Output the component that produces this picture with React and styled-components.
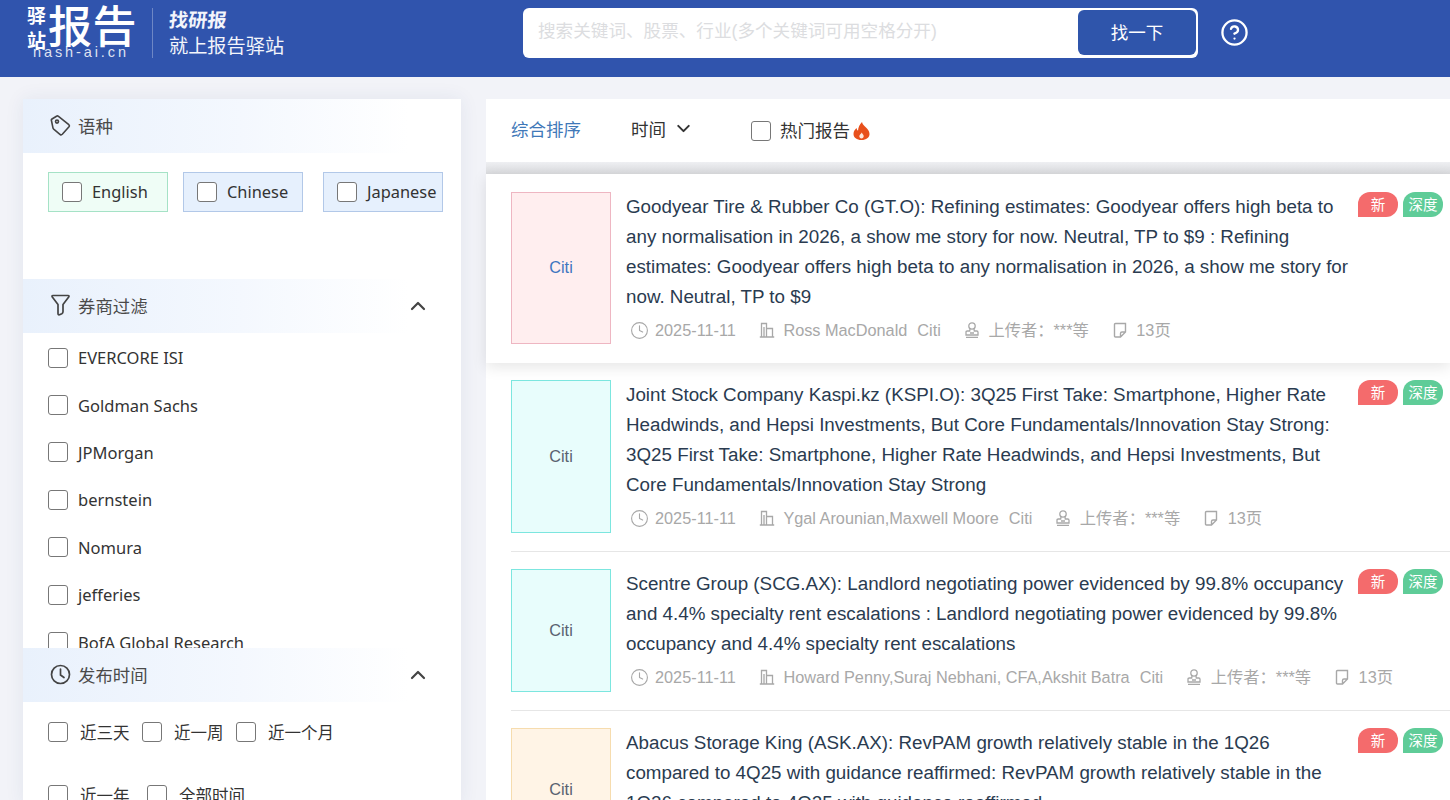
import React from 'react';
import styled, { createGlobalStyle } from 'styled-components';
import { Clock, ChevronUp, ChevronDown, CircleHelp } from 'lucide-react';

const BROKERS = ['EVERCORE ISI', 'Goldman Sachs', 'JPMorgan', 'bernstein', 'Nomura', 'jefferies', 'BofA Global Research', 'Morgan Stanley'];

const REPORTS = [
	{
		title: 'Goodyear Tire & Rubber Co (GT.O): Refining estimates: Goodyear offers high beta to any normalisation in 2026, a show me story for now. Neutral, TP to $9 : Refining estimates: Goodyear offers high beta to any normalisation in 2026, a show me story for now. Neutral, TP to $9',
		authors: 'Ross MacDonald',
		tone: 'pink',
		active: true,
	},
	{
		title: 'Joint Stock Company Kaspi.kz (KSPI.O): 3Q25 First Take: Smartphone, Higher Rate Headwinds, and Hepsi Investments, But Core Fundamentals/Innovation Stay Strong: 3Q25 First Take: Smartphone, Higher Rate Headwinds, and Hepsi Investments, But Core Fundamentals/Innovation Stay Strong',
		authors: 'Ygal Arounian,Maxwell Moore',
		tone: 'cyan',
	},
	{
		title: 'Scentre Group (SCG.AX): Landlord negotiating power evidenced by 99.8% occupancy and 4.4% specialty rent escalations : Landlord negotiating power evidenced by 99.8% occupancy and 4.4% specialty rent escalations',
		authors: 'Howard Penny,Suraj Nebhani, CFA,Akshit Batra',
		tone: 'cyan',
	},
	{
		title: 'Abacus Storage King (ASK.AX): RevPAM growth relatively stable in the 1Q26 compared to 4Q25 with guidance reaffirmed: RevPAM growth relatively stable in the 1Q26 compared to 4Q25 with guidance reaffirmed',
		authors: 'James Druce',
		tone: 'cream',
	},
];

const TONES = {
	pink: { bg: '#ffeeef', border: '#eeb6c2', text: '#3f76c0' },
	cyan: { bg: '#e8fdfc', border: '#7ce6df', text: '#5a6270' },
	cream: { bg: '#fff4e6', border: '#f6dcae', text: '#5a6270' },
};

const TagIcon = () => (
	<svg width="21" height="21" viewBox="0 0 21 21" fill="none" stroke="#444" strokeWidth="1.6">
		<path d="M1.500 5.800Q1 4.700 2 4L6.500 1.200Q7.500.6 8.500 1.300L18.800 9.700Q19.800 10.700 19 11.700L12.300 19.300Q11.300 20.300 10.200 19.500L3.700 14.200Q3 13.600 2.900 12.700Z" />
		<circle cx="7" cy="6.600" r="1.500" />
	</svg>
);

const FunnelIcon = () => (
	<svg width="21" height="22" viewBox="0 0 21 22" fill="none" stroke="#444" strokeWidth="1.700" strokeLinejoin="round">
		<path d="M3 1.500H18Q19.500 1.500 18.700 3L13 10.500V17.800Q13 19 11.800 19.700L9.500 20.800Q8 21.300 8 19.500V10.500L2.300 3Q1.500 1.500 3 1.500Z" />
	</svg>
);

const ClockIcon = () => (
	<svg width="21" height="21" viewBox="0 0 21 21" fill="none" stroke="#444" strokeWidth="1.700" strokeLinecap="round">
		<circle cx="10.500" cy="10.500" r="9" />
		<path d="M10.500 5v6l3.500 2.500" />
	</svg>
);

const BuildingIcon = () => (
	<svg width="16" height="16" viewBox="0 0 16 16" fill="none" stroke="#a8a8a8" strokeWidth="1.300">
		<path d="M.8 15h14.400M2.500 15V1.500h5V15M7.500 6.500h6V15M5 5v10" />
	</svg>
);

const UploaderIcon = () => (
	<svg width="16" height="16" viewBox="0 0 16 16" fill="none" stroke="#a8a8a8" strokeWidth="1.300">
		<circle cx="8" cy="4" r="3.200" />
		<path d="M6 7l-.3 2H3.200Q2 9 2 10.200V13h12v-2.800Q14 9 12.800 9h-2.500L10 7M2 15.400h12M6 11h4" />
	</svg>
);

const PageIcon = () => (
	<svg width="16" height="16" viewBox="0 0 16 16" fill="none" stroke="#a8a8a8" strokeWidth="1.400">
		<path d="M3.500 1.500h10v8.500l-5 5h-5q-1 0-1-1v-11.500q0-1 1-1zM13.500 10h-3.500q-1.500 0-1.500 1.500V15" />
	</svg>
);

const FlameIcon = () => (
	<svg width="17" height="18" viewBox="0 0 17 18">
		<path fill="#e8501c" d="M9 0c.5 2.500 2.300 3.800 4 5.600 1.600 1.700 3.500 3.600 3.500 6.400 0 3.500-3.300 6-8 6s-8-2.500-8-6c0-2.700 1.500-4.600 3-6 .2 1.300.7 2.200 1.500 2.700C5.300 5.600 6.500 2.300 9 0z" />
		<path fill="#ffe6da" d="M8.700 10.500c.4 1.200 2 2 2 3.800 0 1.200-.9 2.200-2.200 2.200s-2.200-1-2.200-2.200c0-1.700 1.900-2.300 2.400-3.800z" />
	</svg>
);

const App = () => (
	<>
		<GlobalStyle />
		<Header>
			<Logo>
				<LogoTop>
					<LogoStack>
						<span>驿</span>
						<span>站</span>
					</LogoStack>
					<LogoBig>报告</LogoBig>
				</LogoTop>
				<LogoDomain>nash-ai.cn</LogoDomain>
			</Logo>
			<Slogan>
				<SloganBold>找研报</SloganBold>
				<span>就上报告驿站</span>
			</Slogan>
			<SearchBox>
				<SearchInput placeholder="搜索关键词、股票、行业(多个关键词可用空格分开)" />
				<SearchButton>找一下</SearchButton>
			</SearchBox>
			<HelpLink>
				<CircleHelp size={29} strokeWidth={1.9} color="#fff" />
			</HelpLink>
		</Header>

		<Page>
			<Sidebar>
				<SectionHead>
					<HeadLabel>
						<TagIcon />
						语种
					</HeadLabel>
				</SectionHead>
				<LangBody>
					<LangChip $green>
						<Check type="checkbox" />
						<span>English</span>
					</LangChip>
					<LangChip>
						<Check type="checkbox" />
						<span>Chinese</span>
					</LangChip>
					<LangChip $far>
						<Check type="checkbox" />
						<span>Japanese</span>
					</LangChip>
				</LangBody>

				<SectionHead>
					<HeadLabel>
						<FunnelIcon />
						券商过滤
					</HeadLabel>
					<ChevronUp size={24} strokeWidth={2.2} color="#444" />
				</SectionHead>
				<BrokerList>
					{BROKERS.map((name) => (
						<BrokerRow key={name}>
							<Check type="checkbox" />
							{name}
						</BrokerRow>
					))}
				</BrokerList>

				<SectionHead>
					<HeadLabel>
						<ClockIcon />
						发布时间
					</HeadLabel>
					<ChevronUp size={24} strokeWidth={2.2} color="#444" />
				</SectionHead>
				<TimeBody>
					<TimeRow $gap={12.5}>
						<TimeOption><Check type="checkbox" />近三天</TimeOption>
						<TimeOption><Check type="checkbox" />近一周</TimeOption>
						<TimeOption><Check type="checkbox" />近一个月</TimeOption>
					</TimeRow>
					<TimeRow $gap={17.5}>
						<TimeOption><Check type="checkbox" />近一年</TimeOption>
						<TimeOption><Check type="checkbox" />全部时间</TimeOption>
					</TimeRow>
				</TimeBody>
			</Sidebar>

			<Main>
				<Toolbar>
					<SortLink>综合排序</SortLink>
					<SortMenu>
						<span>时间</span>
						<ChevronDown size={21} strokeWidth={2.3} />
					</SortMenu>
					<HotFilter>
						<HotCheck type="checkbox" />
						<HotLabel>热门报告</HotLabel>
						<FlameIcon />
					</HotFilter>
				</Toolbar>
				<ToolbarEdge />
				{REPORTS.map((report) => (
					<Report key={report.authors} $active={report.active}>
						<ReportRow $active={report.active}>
							<Cover $tone={report.tone} $active={report.active}>Citi</Cover>
							<ReportBody>
								<Title>{report.title}</Title>
								<Meta>
									<MetaItem>
										<DateClock>
											<Clock size={19} strokeWidth={1.4} color="#a8a8a8" />
										</DateClock>
										2025-11-11
									</MetaItem>
									<MetaItem>
										<BuildingIcon />
										{report.authors}
										<Broker>Citi</Broker>
									</MetaItem>
									<MetaItem>
										<UploaderIcon />
										上传者：***等
									</MetaItem>
									<MetaItem>
										<PageIcon />
										13页
									</MetaItem>
								</Meta>
							</ReportBody>
							<Badges>
								<Badge $bg="#f46b6c">新</Badge>
								<Badge $bg="#5fcc98">深度</Badge>
							</Badges>
						</ReportRow>
					</Report>
				))}
			</Main>
		</Page>
	</>
);

export default App;

const GlobalStyle = createGlobalStyle`
	html, body {
		margin: 0;
		height: 800px;
		overflow: hidden;
		background: #f2f3f8;
		font-family: "Liberation Sans", "Noto Sans CJK SC", sans-serif;
	}
	* { box-sizing: border-box; }
`;

const Header = styled.header`
	height: 77px;
	background: #3054ad;
	display: flex;
	align-items: flex-start;
	padding: 8px 0 0 27px;
	color: #fff;
`;

const Logo = styled.div`
	width: 125px;
	margin-top: -7px;
	display: flex;
	flex-direction: column;
`;

const LogoTop = styled.div`
	display: flex;
	height: 44px;
`;

const LogoStack = styled.div`
	width: 22px;
	height: 50px;
	display: flex;
	flex-direction: column;
	justify-content: space-between;
	font-size: 19px;
	font-weight: 700;
	line-height: 19px;
	padding-top: 6px;
`;

const LogoBig = styled.div`
	font-family: "Noto Sans CJK SC", sans-serif;
	font-size: 44px;
	font-weight: 500;
	line-height: 46px;
	margin-left: -1px;
	letter-spacing: 0.500px;
	white-space: nowrap;
`;

const LogoDomain = styled.div`
	font-size: 14.500px;
	line-height: 14px;
	letter-spacing: 2.900px;
	padding-left: 6px;
	color: rgba(255, 255, 255, 0.85);
`;

const Slogan = styled.div`
	height: 50px;
	border-left: 1px solid rgba(255, 255, 255, 0.3);
	padding-left: 16px;
	display: flex;
	flex-direction: column;
	font-size: 19.200px;
	line-height: 26px;
	width: 371px;
	color: #f3f5fb;
`;

const SloganBold = styled.span`
	display: block;
	font-weight: 700;
	transform-origin: left center;
	transform: skewX(-6deg);
`;

const SearchBox = styled.div`
	width: 675px;
	height: 50px;
	background: #fff;
	border-radius: 6px;
	display: flex;
	align-items: center;
	justify-content: space-between;
	padding: 2px 2px 3px 15px;
`;

const SearchInput = styled.input`
	flex: 1;
	border: none;
	outline: none;
	padding: 0 0 2px;
	background: transparent;
	font: inherit;
	font-size: 17.600px;
	&::placeholder { color: #dcdde0; }
`;

const SearchButton = styled.button`
	width: 118px;
	height: 45px;
	padding: 0 0 3px;
	border: none;
	border-radius: 6px;
	background: #2f55ab;
	color: #fff;
	font: inherit;
	font-size: 17.500px;
`;

const HelpLink = styled.div`
	margin: 10px 0 0 22px;
	display: flex;
`;

const Page = styled.div`
	display: flex;
	align-items: flex-start;
	padding: 22px 0 0 23px;
	gap: 25px;
`;

const Sidebar = styled.aside`
	width: 438px;
	flex: none;
	background: #fff;
	box-shadow: 0 0 18px rgba(40, 60, 110, 0.08);
	font-family: "Noto Sans", "Noto Sans CJK SC", sans-serif;
	color: #333;
`;

const SectionHead = styled.div`
	position: relative;
	height: 54px;
	display: flex;
	align-items: center;
	justify-content: space-between;
	padding: 0 31px 0 27px;
	background: linear-gradient(90deg, #e9f1fc 0%, #f4f8fe 50%, #ffffff 88%);
`;

const HeadLabel = styled.div`
	display: flex;
	align-items: center;
	gap: 7px;
	margin-bottom: 2px;
	font-size: 17.400px;
	color: #4a4a4a;
`;

const LangBody = styled.div`
	height: 126px;
	display: flex;
	align-items: flex-start;
	gap: 15px;
	padding: 19px 0 0 25px;
`;

const LangChip = styled.label`
	width: 120px;
	height: 40px;
	flex: none;
	display: flex;
	align-items: center;
	gap: 10px;
	padding-left: 13px;
	margin-left: ${(props) => (props.$far ? '5px' : '0')};
	border: 1px solid ${(props) => (props.$green ? '#a5e2c6' : '#b2c8e8')};
	background: ${(props) => (props.$green ? '#effdf6' : '#e6f0fd')};
	font-size: 16.400px;
	white-space: nowrap;
	span { margin-top: -2px; }
`;

const Check = styled.input`
	appearance: none;
	width: 20px;
	height: 20px;
	margin: 0;
	flex: none;
	background: #fff;
	border: 1.500px solid #777;
	border-radius: 3px;
`;

const BrokerList = styled.div`
	height: 315px;
	overflow: hidden;
	padding: 1px 0 0 25px;
`;

const BrokerRow = styled.label`
	height: 47.400px;
	display: flex;
	align-items: center;
	gap: 10px;
	font-size: 16.500px;
`;

const TimeBody = styled.div`
	padding: 20px 0 0 25px;
	display: flex;
	flex-direction: column;
	gap: 43px;
`;

const TimeRow = styled.div`
	display: flex;
	gap: ${(props) => props.$gap}px;
`;

const TimeOption = styled.label`
	display: flex;
	align-items: center;
	gap: 12px;
	height: 20px;
	font-size: 16.500px;
`;

const Main = styled.main`
	flex: 1;
	min-width: 0;
`;

const Toolbar = styled.div`
	height: 63px;
	background: #fff;
	display: flex;
	align-items: center;
	padding-left: 25px;
	font-size: 17.500px;
	color: #333;
`;

const SortLink = styled.span`
	color: #3f78b8;
	width: 120px;
	padding-bottom: 4px;
`;

const SortMenu = styled.span`
	display: flex;
	align-items: center;
	gap: 7px;
	width: 120px;
	padding-bottom: 4px;
`;

const HotFilter = styled.label`
	display: flex;
	align-items: center;
	gap: 9px;
`;

const HotCheck = styled(Check)`
	margin-top: 1px;
`;

const HotLabel = styled.span`
	margin-right: -6px;
	padding-bottom: 3px;
`;

const ToolbarEdge = styled.div`
	height: 12px;
	background: linear-gradient(180deg, #eeeff2 0%, #d9dadd 100%);
`;

const Report = styled.article`
	position: relative;
	background: #fff;
	padding-left: 25px;
	z-index: ${(props) => (props.$active ? 1 : 0)};
	box-shadow: ${(props) => (props.$active ? '0 4px 14px rgba(0, 0, 0, 0.1)' : 'none')};
`;

const ReportRow = styled.div`
	display: flex;
	padding: ${(props) => (props.$active ? '18px 7px 18px 0' : '17.400px 7px 17.400px 0')};
	border-bottom: ${(props) => (props.$active ? 'none' : '1px solid #e6e6e6')};
`;

const Cover = styled.div`
	width: 100px;
	flex: none;
	margin: 0 15px ${(props) => (props.$active ? '1px' : '0')} 0;
	padding-bottom: ${(props) => (props.$active ? '1px' : '0')};
	display: flex;
	align-items: center;
	justify-content: center;
	font-size: 16.300px;
	background: ${(props) => TONES[props.$tone].bg};
	border: 1px solid ${(props) => TONES[props.$tone].border};
	color: ${(props) => TONES[props.$tone].text};
`;

const ReportBody = styled.div`
	width: 724px;
	flex: none;
`;

const Title = styled.div`
	font-size: 18.800px;
	line-height: 30px;
	color: #2a3b50;
`;

const Meta = styled.div`
	height: 33px;
	display: flex;
	align-items: flex-end;
	gap: 23px;
	padding: 0 0 5px 3.500px;
	font-size: 16.300px;
	line-height: 20px;
	color: #a8a8a8;
`;

const MetaItem = styled.span`
	display: flex;
	align-items: center;
	gap: 8.500px;
	white-space: nowrap;
`;

const DateClock = styled.span`
	display: flex;
	margin-right: -2px;
`;

const Broker = styled.span`
	margin-left: 1.500px;
`;

const Badges = styled.div`
	display: flex;
	gap: 5px;
	margin-left: 8px;
`;

const Badge = styled.span`
	width: 40px;
	height: 25px;
	padding-bottom: 2px;
	display: flex;
	align-items: center;
	justify-content: center;
	border-radius: 12px 12px 12px 0;
	background: ${(props) => props.$bg};
	color: #fff;
	font-size: 14.500px;
`;
